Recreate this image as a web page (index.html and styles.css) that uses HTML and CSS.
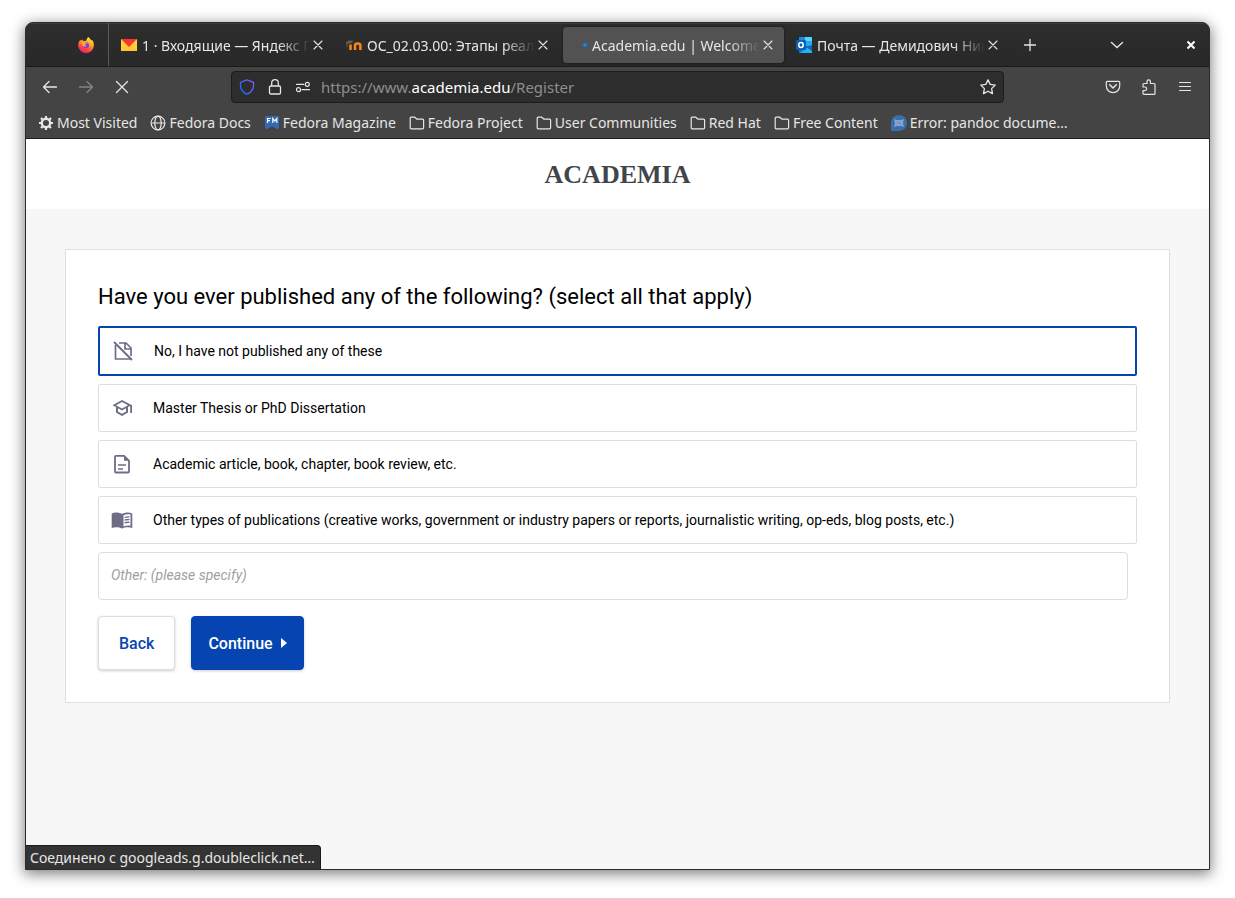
FILE: index.html
```html
<!DOCTYPE html>
<html lang="en">
<head>
<meta charset="utf-8">
<meta name="viewport" content="width=device-width, initial-scale=1">
<title>Academia.edu | Welcome</title>
<link rel="stylesheet" href="styles.css">
</head>
<body>
<svg class="defs" width="0" height="0" aria-hidden="true">
  <symbol id="close" viewBox="0 0 16 16"><path d="M4 4l8 8M12 4l-8 8" fill="none" stroke="currentColor" stroke-width="1.1" stroke-linecap="round"/></symbol>
  <symbol id="folder" viewBox="0 0 16 16"><path d="M1.2 3.200q0-1 1-1h3.600l2.200 2h5.600q1 0 1 1v7.600q0 1-1 1H2.200q-1 0-1-1z" fill="none" stroke="currentColor" stroke-width="1.200" stroke-linejoin="round"/></symbol>
</svg>
<div class="window">
  <header class="tabbar">
    <button class="pinned" aria-label="Firefox">
      <svg width="16" height="16" viewBox="0 0 16 16">
        <defs>
          <linearGradient id="fire" x1="0.8" y1="0" x2="0.3" y2="1"><stop offset="0" stop-color="#fff44f"/><stop offset=".35" stop-color="#ffb01e"/><stop offset=".7" stop-color="#ff4a3a"/><stop offset="1" stop-color="#e31587"/></linearGradient>
        </defs>
        <path d="M10.300 0c1 .9 2.200 1.900 3 3.500l.9-.4c1.200 1.500 1.700 3.200 1.700 5.100A7.900 7.900 0 0 1 .1 8.200c0-2.200 1-4.500 2.500-5.800l.3 1.500 1.500-1.500 1 1.700 3-.3c0-1.600.8-2.900 1.900-3.800z" fill="url(#fire)"/>
        <circle cx="8" cy="8.300" r="3" fill="#7542e5"/>
        <path d="M3.200 5.300c1.500-1 3.200-.6 4.100.3l2 .4c-.2.800-1.600 1-2 1.300-.4.900.3 1.700 1.300 1.500-1.200 1.500-3.700 1-4-1z" fill="#ffa436"/>
      </svg>
    </button>
    <nav class="tabs" aria-label="Tabs">
      <div class="tab">
        <svg width="16" height="16" viewBox="0 0 16 16"><path d="M0 2h16v12H0z" fill="#ffd03b"/><path d="M0 14l6-6 2 1.500L10 8l6 6z" fill="#ffc436"/><path d="M0 2h16L8 10z" fill="#f8342d"/></svg>
        <span class="tab-title">1 · Входящие — Яндекс П</span>
        <button class="tab-close" aria-label="Close tab"><svg width="16" height="16"><use href="#close"/></svg></button>
      </div>
      <div class="tab">
        <svg width="16" height="16" viewBox="0 0 16 16"><path d="M0 6l3-2 4 .3-3 1.700zM1 6v4" fill="#67625c" stroke="#67625c"/><path d="M4.500 13V7.500M9 13V8.500q0-2 2.700-2t2.700 2V13" fill="none" stroke="#f98012" stroke-width="2.600"/></svg>
        <span class="tab-title">ОС_02.03.00: Этапы реал</span>
        <button class="tab-close" aria-label="Close tab"><svg width="16" height="16"><use href="#close"/></svg></button>
      </div>
      <div class="tab active">
        <svg class="loading" width="16" height="16" viewBox="0 0 16 16"><circle cx="14" cy="8" r="2" fill="#0a84ff"/></svg>
        <span class="tab-title">Academia.edu | Welcome</span>
        <button class="tab-close" aria-label="Close tab"><svg width="16" height="16"><use href="#close"/></svg></button>
      </div>
      <div class="tab">
        <svg width="16" height="16" viewBox="0 0 16 16"><path d="M3 1q0-1 1-1h11q1 0 1 1v15H4q-1 0-1-1z" fill="#0a78d4"/><path d="M3 1q0-1 1-1h5v7H3z" fill="#1490df"/><path d="M9 0h6q1 0 1 1v6H9z" fill="#50d9ff"/><path d="M9 4h7v5H9z" fill="#28a8ea"/><path d="M4 16L16 7v8q0 1-1 1z" fill="#28b0f0"/><path d="M10 10l6-2v6z" fill="#1566ad"/><rect y="3" width="10" height="10" rx="1" fill="#0860b8"/><ellipse cx="5" cy="8" rx="2.200" ry="2.500" fill="none" stroke="#fff" stroke-width="1.500"/></svg>
        <span class="tab-title">Почта — Демидович Ник</span>
        <button class="tab-close" aria-label="Close tab"><svg width="16" height="16"><use href="#close"/></svg></button>
      </div>
    </nav>
    <button class="icon-button new-tab" aria-label="New tab"><svg width="16" height="16" viewBox="0 0 16 16"><path d="M8 2.500v11M2.500 8h11" stroke="currentColor" stroke-width="1.300" stroke-linecap="round"/></svg></button>
    <div class="window-controls">
      <button class="icon-button" aria-label="List all tabs"><svg width="16" height="16" viewBox="0 0 16 16"><path d="M2.500 5.500L8 10.500l5.500-5" fill="none" stroke="currentColor" stroke-width="1.400" stroke-linecap="round"/></svg></button>
      <button class="icon-button" aria-label="Close window"><svg width="16" height="16" viewBox="0 0 16 16"><path d="M4.500 4.500l7 7M11.500 4.500l-7 7" stroke="#fff" stroke-width="2"/></svg></button>
    </div>
  </header>

  <div class="toolbar">
    <button class="icon-button" aria-label="Back one page"><svg width="16" height="16" viewBox="0 0 16 16"><path d="M14.500 8H1.500M7 2.500L1.500 8 7 13.500" fill="none" stroke="currentColor" stroke-width="1.300" stroke-linecap="round" stroke-linejoin="round"/></svg></button>
    <button class="icon-button dim" aria-label="Forward" disabled><svg width="16" height="16" viewBox="0 0 16 16"><path d="M1.500 8h13M9 2.500L14.500 8 9 13.500" fill="none" stroke="currentColor" stroke-width="1.300" stroke-linecap="round" stroke-linejoin="round"/></svg></button>
    <button class="icon-button" aria-label="Stop"><svg width="16" height="16" viewBox="0 0 16 16"><path d="M2.500 2.500l11 11M13.500 2.500l-11 11" stroke="currentColor" stroke-width="1.300" stroke-linecap="round"/></svg></button>
    <div class="urlbar">
      <svg width="16" height="16" viewBox="0 0 16 16"><defs><linearGradient id="shield" x1="1" y1="0" x2="0" y2="1"><stop offset="0" stop-color="#9059ff"/><stop offset="1" stop-color="#0070f0"/></linearGradient></defs><path d="M8 .8l6.500 2.500v3.500c0 3.700-3 7.300-6.500 8.400C4.500 14.100 1.500 10.500 1.500 6.800V3.300z" fill="none" stroke="url(#shield)" stroke-width="1.300" stroke-linejoin="round"/></svg>
      <svg width="16" height="16" viewBox="0 0 16 16"><rect x="2.500" y="7" width="11" height="8" rx="1.300" fill="none" stroke="currentColor" stroke-width="1.300"/><path d="M4.700 7V4a3.300 3.300 0 0 1 6.600 0v3" fill="none" stroke="currentColor" stroke-width="1.300"/></svg>
      <svg width="16" height="16" viewBox="0 0 16 16"><g fill="none" stroke="currentColor" stroke-width="1.200" stroke-linecap="round"><path d="M1.500 5.300h7.300M7 10.700h7.500"/><circle cx="12.300" cy="5.300" r="2"/><circle cx="3.500" cy="10.700" r="2"/></g></svg>
      <span class="url">https://www.<b>academia.edu</b>/Register</span>
      <svg width="16" height="16" viewBox="0 0 16 16"><path d="M8 .9l2.200 4.500 5 .7-3.600 3.500.9 5L8 12.200l-4.500 2.400.9-5L.8 6.100l5-.7z" fill="none" stroke="currentColor" stroke-width="1.300" stroke-linejoin="round"/></svg>
    </div>
    <button class="icon-button" aria-label="Save to Pocket"><svg width="16" height="16" viewBox="0 0 16 16"><path d="M2.300 2.300h11.400q1 0 1 1v3.700a6.700 6.700 0 0 1-13.400 0V3.300q0-1 1-1z" fill="none" stroke="currentColor" stroke-width="1.200"/><path d="M4.700 5.800L8 9l3.300-3.200" fill="none" stroke="currentColor" stroke-width="1.500" stroke-linecap="round" stroke-linejoin="round"/></svg></button>
    <button class="icon-button" aria-label="Extensions"><svg width="16" height="16" viewBox="0 0 16 16"><path d="M2 7.500V5.500q0-1 1-1h3V2.600a1.700 1.700 0 0 1 3.400 0v1.900H13q1 0 1 1v8.900q0 1-1 1H3q-1 0-1-1v-2.700h1.800a1.800 1.800 0 0 0 0-3.700H2z" fill="none" stroke="currentColor" stroke-width="1.200" stroke-linejoin="round"/></svg></button>
    <button class="icon-button" aria-label="Menu"><svg width="16" height="16" viewBox="0 0 16 16"><path d="M2.500 3.500h11M2.500 7.500h11M2.500 11.500h11" stroke="currentColor" stroke-width="1.200" stroke-linecap="round"/></svg></button>
  </div>

  <nav class="bookmarks" aria-label="Bookmarks">
    <a href="#"><svg width="16" height="16" viewBox="0 0 16 16"><circle cx="8" cy="8" r="4.200" fill="none" stroke="currentColor" stroke-width="2.400"/><path d="M8 1v2.500M8 12.500V15M1 8h2.500M12.500 8H15M3 3l2 2M11 11l2 2M13 3l-2 2M5 11l-2 2" stroke="currentColor" stroke-width="2.200"/></svg>Most Visited</a>
    <a href="#"><svg width="16" height="16" viewBox="0 0 16 16"><g fill="none" stroke="currentColor" stroke-width="1.200"><circle cx="8" cy="8" r="6.900"/><ellipse cx="8" cy="8" rx="3.200" ry="6.900"/><path d="M1 8h14"/></g></svg>Fedora Docs</a>
    <a href="#"><svg width="16" height="16" viewBox="0 0 16 16"><path d="M1 1h14v11.500H1z" fill="#3668b0"/><path d="M1 12h4l-4 3zM15 12h-4l4 3z" fill="#294172"/><path d="M1 12h14v1.200l-2.500 1L8 10.500l-4.500 3.700-2.500-1z" fill="#3668b0"/><path d="M8 11l5 4H3z" fill="#444"/><path d="M3.500 8V3.500h3M3.500 5.600h2.500M8.800 8V3.500L10.800 6l2-2.500V8" fill="none" stroke="#fff" stroke-width="1.200"/></svg>Fedora Magazine</a>
    <a href="#"><svg width="16" height="16"><use href="#folder"/></svg>Fedora Project</a>
    <a href="#"><svg width="16" height="16"><use href="#folder"/></svg>User Communities</a>
    <a href="#"><svg width="16" height="16"><use href="#folder"/></svg>Red Hat</a>
    <a href="#"><svg width="16" height="16"><use href="#folder"/></svg>Free Content</a>
    <a href="#"><svg width="16" height="16" viewBox="0 0 16 16"><path d="M8 0a8 8 0 1 1 0 16H0V8a8 8 0 0 1 8-8z" fill="#3c6eaa"/><path d="M3 4l2.500 1h5L13 4l-1 4 1 4-2.500-1h-5L3 12l1-4z" fill="#83a7d0"/><path d="M5.500 6.500l5 3M10.500 6.500l-5 3" stroke="#6c92c0"/></svg>Error: pandoc docume…</a>
  </nav>

  <div class="page">
    <div class="site-header"><a class="logo" href="#">ACADEMIA</a></div>
    <main class="content">
      <form class="card">
        <h1>Have you ever published any of the following? (select all that apply)</h1>
        <div class="options">
          <button type="button" class="option selected" aria-pressed="true">
            <svg width="24" height="24" viewBox="0 0 24 24"><g fill="none" stroke="currentColor" stroke-width="1.700"><path d="M8 4h7l5 5v8M4.500 6v14H19M14 4v6h6"/><path d="M3 3l18 18" stroke-width="1.900"/></g></svg>
            No, I have not published any of these
          </button>
          <button type="button" class="option" aria-pressed="false">
            <svg width="24" height="24" viewBox="0 0 24 24"><path fill="currentColor" d="M12 4L2.500 9.200 6 11.100v5.400L12 20l6-3.500v-5.400l2.200-1.200v7H22V9.200zm6 5.200L12 12.500 6 9.200l6-3.300zm-2 6.200l-4 2.400-4-2.400v-3.200l4 2.200 4-2.200z"/></svg>
            Master Thesis or PhD Dissertation
          </button>
          <button type="button" class="option" aria-pressed="false">
            <svg width="24" height="24" viewBox="0 0 24 24"><path d="M6 3.800h8l5 5V19.500q0 1-1 1H6q-1 0-1-1V4.800q0-1 1-1z" fill="none" stroke="currentColor" stroke-width="1.800"/><path d="M14 3l5.500 5.800H14z" fill="currentColor"/><path d="M8 13h8M8 17h5" stroke="currentColor" stroke-width="1.700"/></svg>
            Academic article, book, chapter, book review, etc.
          </button>
          <button type="button" class="option" aria-pressed="false">
            <svg width="24" height="24" viewBox="0 0 24 24"><path fill="currentColor" d="M12 6c-2.500-1.700-7.500-2-10.300-.6V20c3-1.200 7.500-1 10.300.5 2.800-1.500 7.500-1.700 10.300-.5V5.400C19.500 4 14.500 4.300 12 6zm1.500 1.200c2-1 5-1.200 7-.7v11.300c-2-.4-5-.3-7 .7z"/><path d="M14.500 9.500q2.300-.9 5-.6M14.500 12.200q2.300-.9 5-.6M14.500 14.900q2.300-.9 5-.6" fill="none" stroke="currentColor" stroke-width="1.300"/></svg>
            Other types of publications (creative works, government or industry papers or reports, journalistic writing, op-eds, blog posts, etc.)
          </button>
          <input class="other" type="text" aria-label="Other" placeholder="Other: (please specify)">
        </div>
        <div class="actions">
          <button type="button" class="btn">Back</button>
          <button type="submit" class="btn primary">Continue<svg width="6" height="10" viewBox="0 0 6 10"><path d="M0 0l6 5-6 5z" fill="currentColor"/></svg></button>
        </div>
      </form>
    </main>
    <div class="status">Соединено с googleads.g.doubleclick.net…</div>
  </div>
</div>
</body>
</html>
```
FILE: styles.css
```css
* {
  box-sizing: border-box;
}

body {
  display: flex;
  min-height: 100vh;
  margin: 0;
  padding: 22px 25px 28px;
  background: #fff;
  font-family: "Noto Sans", sans-serif;
  font-size: 14px;
}

button {
  margin: 0;
  padding: 0;
  border: 0;
  background: none;
  color: inherit;
  font: inherit;
}

svg {
  flex: none;
}

.defs {
  position: absolute;
}

.window {
  display: flex;
  flex: 1;
  flex-direction: column;
  min-width: 0;
  overflow: hidden;
  border: 1px solid #2b2b2b;
  border-radius: 8px 8px 0 0;
  background: #444;
  color: #e6e6e6;
  box-shadow: 0 3px 14px 1px rgba(0, 0, 0, 0.5);
}

.tabbar {
  display: flex;
  align-items: center;
  height: 44px;
  border-bottom: 1px solid #1b1b1b;
  background: linear-gradient(#2e2e2e, #282828);
  box-shadow: inset 0 1px #3c3c3c;
}

.pinned {
  display: flex;
  align-items: center;
  align-self: stretch;
  justify-content: flex-end;
  width: 83px;
  padding-right: 14px;
  border-right: 1px solid #5a5a5a;
}

.tabs {
  display: flex;
  flex: 0 1 896px;
  gap: 4px;
  min-width: 0;
  margin-left: 4px;
}

.tab {
  display: flex;
  flex: 1;
  align-items: center;
  gap: 5px;
  min-width: 0;
  height: 36px;
  padding: 0 8px;
  border-radius: 4px;
}

.tab.active {
  background: #525252;
  box-shadow: 0 0 3px rgba(0, 0, 0, 0.5);
}

.tab-title {
  flex: 1;
  overflow: hidden;
  padding-top: 2px;
  white-space: nowrap;
  -webkit-mask-image: linear-gradient(to left, transparent, #000 32px);
  mask-image: linear-gradient(to left, transparent, #000 32px);
}

.tab-close {
  display: flex;
  margin-left: -5px;
}

.icon-button {
  display: flex;
  flex: none;
  align-items: center;
  justify-content: center;
  width: 36px;
  height: 36px;
}

.icon-button.dim {
  color: #858585;
}

.new-tab {
  margin-left: 3px;
}

.window-controls {
  display: flex;
  gap: 38px;
  margin-left: auto;
}

.toolbar {
  display: flex;
  align-items: center;
  height: 40px;
  padding: 0 6px;
}

.urlbar {
  display: flex;
  flex: 1;
  align-items: center;
  gap: 12px;
  min-width: 0;
  height: 32px;
  margin: 0 91px;
  padding: 0 7px;
  border: 1px solid #1c1c1c;
  border-radius: 4px;
  background: #2d2d2d;
}

.url {
  flex: 1;
  overflow: hidden;
  margin-left: -2px;
  color: #8e8e8e;
  font-size: 15px;
  white-space: nowrap;
}

.url b {
  color: #fff;
  font-weight: 400;
}

.bookmarks {
  display: flex;
  align-items: center;
  gap: 13px;
  height: 32px;
  padding: 0 12px;
  border-bottom: 1px solid #1b1b1b;
}

.bookmarks a {
  display: flex;
  align-items: center;
  gap: 3px;
  color: inherit;
  text-decoration: none;
  white-space: nowrap;
}

.page {
  position: relative;
  flex: 1;
  background: #f7f7f7;
  color: #000;
  font-family: Roboto, sans-serif;
}

.site-header {
  display: flex;
  align-items: center;
  justify-content: center;
  height: 70px;
  padding-top: 2px;
  background: #fff;
}

.logo {
  color: #41454a;
  font-family: "Liberation Serif", serif;
  font-size: 26px;
  font-weight: 700;
  text-decoration: none;
}

.content {
  padding: 40px 39px;
}

.card {
  padding: 32px;
  border: 1px solid #dddde2;
  background: #fff;
}

.card h1 {
  margin: 0 0 14px;
  font-size: 22px;
  font-weight: 400;
  line-height: 30px;
}

.options {
  display: flex;
  flex-direction: column;
  gap: 8px;
}

.option {
  display: flex;
  align-items: center;
  gap: 19px;
  min-height: 48px;
  padding: 11px;
  border: 1px solid #dddde2;
  border-radius: 2px;
  font-size: 14px;
  text-align: left;
}

.option svg {
  color: #6d6d88;
}

.option.selected {
  min-height: 50px;
  border: 2px solid #0645b1;
}

.other {
  height: 48px;
  margin-right: 9px;
  padding: 0 12px 2px;
  border: 1px solid #dddde2;
  border-radius: 4px;
  background: #fff;
  font: 14px Roboto, sans-serif;
}

.other::placeholder {
  color: #a0a0a0;
  font-style: italic;
}

.actions {
  display: flex;
  gap: 16px;
  margin-top: 16px;
}

.btn {
  display: flex;
  align-items: center;
  gap: 8px;
  height: 54px;
  padding: 0 20px;
  border: 1px solid #dddde2;
  border-radius: 4px;
  background: #fff;
  color: #0645b1;
  font-size: 16px;
  font-weight: 500;
  box-shadow: 0 1px 3px rgba(0, 0, 0, 0.2);
}

.btn.primary {
  padding: 0 16px;
  border-color: #0645b1;
  background: #0645b1;
  color: #fff;
}

.status {
  position: absolute;
  bottom: 0;
  left: 0;
  padding: 0 5px 0 4px;
  border-top: 1px solid #1b1b1b;
  border-right: 1px solid #1b1b1b;
  border-radius: 0 4px 0 0;
  background: #333;
  color: #e6e6e6;
  font-family: "Noto Sans", sans-serif;
  font-size: 14px;
  line-height: 23px;
}
```
